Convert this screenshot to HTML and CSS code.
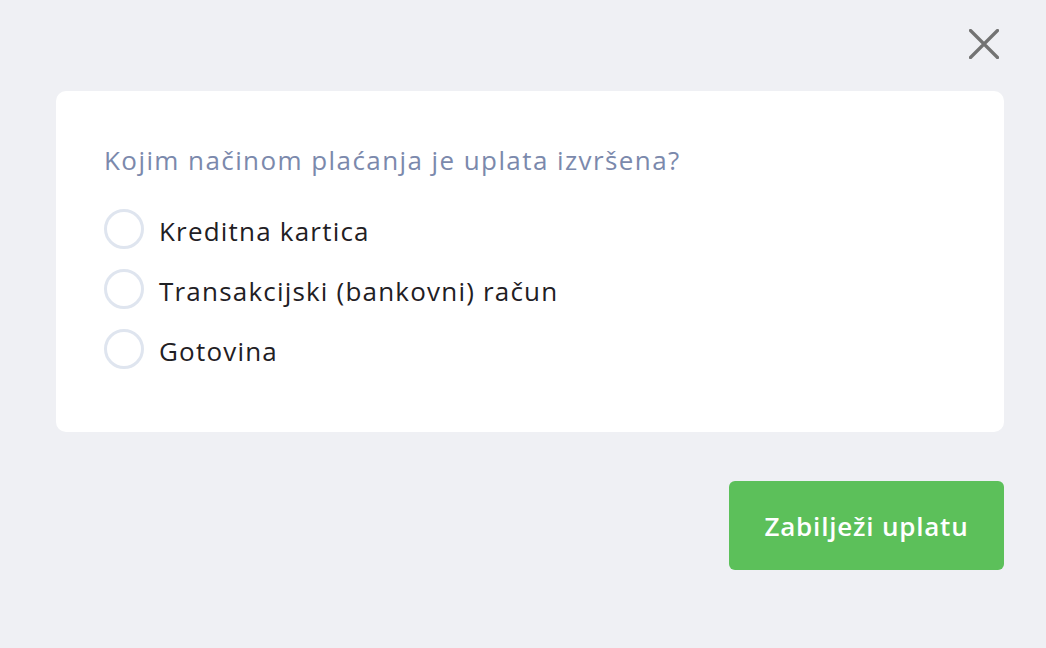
FILE: index.html
```html
<!DOCTYPE html>
<html lang="hr">
<head>
<meta charset="utf-8">
<link rel="stylesheet" href="styles.css">
</head>
<body>
<div class="page">
  <div class="topbar">
    <button class="close" aria-label="Zatvori">
      <svg width="30" height="30" viewBox="0 0 30 30"><path d="M1.5 1.5 L28.5 28.5 M28.5 1.5 L1.5 28.5" stroke="#737373" stroke-width="3.2" stroke-linecap="round" fill="none"/></svg>
    </button>
  </div>
  <div class="card">
    <h2 class="question">Kojim načinom plaćanja je uplata izvršena?</h2>
    <label class="option"><span class="radio"></span><span class="label">Kreditna kartica</span></label>
    <label class="option"><span class="radio"></span><span class="label">Transakcijski (bankovni) račun</span></label>
    <label class="option"><span class="radio"></span><span class="label">Gotovina</span></label>
  </div>
  <div class="actions">
    <button class="submit">Zabilježi uplatu</button>
  </div>
</div>
</body>
</html>
```
FILE: styles.css
```css
html, body {
  margin: 0;
  padding: 0;
  background: #eff0f4;
  height: 100%;
}
body {
  font-family: "Open Sans", "Noto Sans", sans-serif;
}
.page {
  padding: 29px 42px 0 56px;
  display: flex;
  flex-direction: column;
}
.topbar {
  display: flex;
  justify-content: flex-end;
  height: 62px;
}
.close {
  border: 0;
  background: none;
  padding: 0;
  margin-right: 5px;
  width: 30px;
  height: 30px;
  cursor: pointer;
}
.close svg { display: block; }
.card {
  background: #fff;
  border-radius: 10px;
  padding: 52px 48px 56px 48px;
  height: 341px;
  box-sizing: border-box;
}
.question {
  margin: 0 0 22px 0;
  font-size: 26px;
  font-weight: 500;
  color: #7b89ac;
  line-height: 34px;
  letter-spacing: 1.42px;
}
.option {
  display: flex;
  align-items: center;
  height: 60px;
  gap: 15px;
  cursor: pointer;
}
.radio {
  width: 40px;
  height: 40px;
  box-sizing: border-box;
  border: 3px solid #dfe5ef;
  border-radius: 50%;
  flex: none;
}
.label {
  font-size: 26px;
  color: #1f2024;
  letter-spacing: 1.2px;
  margin-top: 4px;
}
.actions {
  display: flex;
  justify-content: flex-end;
  margin-top: 49px;
}
.submit {
  width: 275px;
  height: 89px;
  background: #5cc05a;
  color: #fff;
  border: 0;
  border-radius: 6px;
  font-family: inherit;
  font-size: 26px;
  font-weight: 600;
  letter-spacing: 0.8px;
  cursor: pointer;
}
```
